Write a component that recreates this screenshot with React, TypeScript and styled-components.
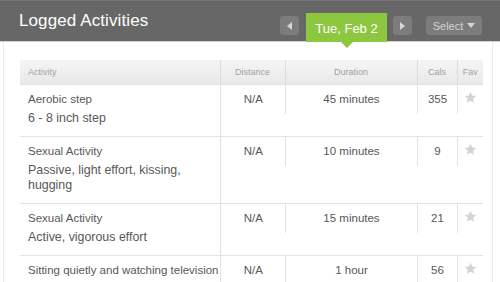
import styled, { createGlobalStyle } from 'styled-components'

type Activity = {
  name: string
  detail?: string
  distance: string
  duration: string
  cals: number
}

const activities: Activity[] = [
  { name: 'Aerobic step', detail: '6 - 8 inch step', distance: 'N/A', duration: '45 minutes', cals: 355 },
  {
    name: 'Sexual Activity',
    detail: 'Passive, light effort, kissing, hugging',
    distance: 'N/A',
    duration: '10 minutes',
    cals: 9,
  },
  { name: 'Sexual Activity', detail: 'Active, vigorous effort', distance: 'N/A', duration: '15 minutes', cals: 21 },
  { name: 'Sitting quietly and watching television', distance: 'N/A', duration: '1 hour', cals: 56 },
]

function StarIcon() {
  return (
    <svg width="13" height="13" viewBox="0 0 24 24">
      <polygon
        points="12,1.5 15.1,8.3 22.5,9.1 17,14.1 18.5,21.5 12,17.8 5.5,21.5 7,14.1 1.5,9.1 8.9,8.3"
        fill="#d4d4d4"
      />
    </svg>
  )
}

function App() {
  return (
    <>
      <GlobalStyle />
      <Header>
        <Title>Logged Activities</Title>
        <Controls>
          <ArrowButton type="button" aria-label="Previous day">
            <svg width="5" height="8" viewBox="0 0 5 8">
              <polygon points="5,0 5,8 0,4" fill="#d6d6d6" />
            </svg>
          </ArrowButton>
          <DateTab>Tue, Feb 2</DateTab>
          <ArrowButton type="button" aria-label="Next day">
            <svg width="5" height="8" viewBox="0 0 5 8">
              <polygon points="0,0 0,8 5,4" fill="#d6d6d6" />
            </svg>
          </ArrowButton>
          <SelectButton type="button">
            Select
            <svg width="8" height="5" viewBox="0 0 8 5">
              <polygon points="0,0 8,0 4,5" fill="#d6d6d6" />
            </svg>
          </SelectButton>
        </Controls>
      </Header>

      <Panel>
        <Table>
          <colgroup>
            <col style={{ width: 200 }} />
            <col style={{ width: 65 }} />
            <col style={{ width: 132 }} />
            <col style={{ width: 40 }} />
            <col style={{ width: 26 }} />
          </colgroup>
          <thead>
            <tr>
              <HeadCell $align="left">Activity</HeadCell>
              <HeadCell>Distance</HeadCell>
              <HeadCell>Duration</HeadCell>
              <HeadCell>Cals</HeadCell>
              <HeadCell>Fav</HeadCell>
            </tr>
          </thead>
          <tbody>
            {activities.map((activity, index) => (
              <Row key={index}>
                <NameCell>
                  <Name>{activity.name}</Name>
                  {activity.detail && <Detail>{activity.detail}</Detail>}
                </NameCell>
                <ValueCell>
                  <Value>{activity.distance}</Value>
                </ValueCell>
                <ValueCell>
                  <Value $divided>{activity.duration}</Value>
                </ValueCell>
                <ValueCell>
                  <Value $divided>{activity.cals}</Value>
                </ValueCell>
                <ValueCell>
                  <Value $divided>
                    <StarIcon />
                  </Value>
                </ValueCell>
              </Row>
            ))}
          </tbody>
        </Table>
      </Panel>
    </>
  )
}

const GlobalStyle = createGlobalStyle`
  body {
    margin: 0;
    background: #fff;
    font-family: "Liberation Sans", Arial, sans-serif;
  }
`

const Header = styled.header`
  height: 42px;
  box-sizing: border-box;
  background: #676767;
  border-top: 1px solid #747474;
  border-bottom: 1px solid #cfcfcf;
  display: flex;
  align-items: center;
  padding: 0 18px 0 19px;
`

const Title = styled.h1`
  margin: 0 0 1px;
  font-size: 17px;
  font-weight: normal;
  color: #fff;
  letter-spacing: 0.1px;
`

const Controls = styled.div`
  margin-left: auto;
  align-self: stretch;
  display: flex;
  align-items: center;
`

const ArrowButton = styled.button`
  width: 19px;
  height: 19px;
  margin-top: 9px;
  border: 0;
  border-radius: 3px;
  background: #7c7c7c;
  display: grid;
  place-items: center;
  padding: 0;
  cursor: pointer;
`

const DateTab = styled.div`
  position: relative;
  align-self: flex-end;
  margin: 0 6px -1px 7px;
  width: 81px;
  height: 29px;
  background: #8dc63f;
  color: #fff;
  font-size: 13px;
  display: flex;
  align-items: center;
  justify-content: center;
  padding-top: 1px;
  box-sizing: border-box;

  &::after {
    content: '';
    position: absolute;
    left: 35px;
    bottom: -6px;
    border-left: 6px solid transparent;
    border-right: 6px solid transparent;
    border-top: 6px solid #8dc63f;
  }
`

const SelectButton = styled.button`
  margin: 9px 0 0 14px;
  width: 56px;
  height: 19px;
  border: 0;
  border-radius: 3px;
  background: #7c7c7c;
  color: #d4d4d4;
  font-family: inherit;
  font-size: 11px;
  display: flex;
  align-items: center;
  justify-content: center;
  gap: 4px;
  padding: 0;
  cursor: pointer;
`

const Panel = styled.main`
  margin: 0 7px 0 3px;
  padding: 18px 9px 0 16px;
  border-left: 1px solid #ececec;
  border-right: 1px solid #ececec;
`

const Table = styled.table`
  width: 463px;
  table-layout: fixed;
  border-collapse: collapse;
`

const HeadCell = styled.th<{ $align?: 'left' | 'center' }>`
  height: 24px;
  padding: 0 0 0 ${(p) => (p.$align === 'left' ? '8px' : '0')};
  background: linear-gradient(180deg, #f5f5f5 0%, #e9e9e9 100%);
  border-left: 1px solid #dcdcdc;
  border-bottom: 1px solid #e2e2e2;
  font-size: 9px;
  font-weight: normal;
  color: #a2a2a2;
  text-align: ${(p) => p.$align ?? 'center'};

  &:first-child {
    border-left: 0;
  }
`

const Row = styled.tr`
  border-bottom: 1px solid #e2e2e2;
`

const NameCell = styled.td`
  padding: 6px 8px 10px;
  border-right: 1px solid #e2e2e2;
  vertical-align: top;
  color: #585858;
`

const Name = styled.div`
  font-size: 11.5px;
  line-height: 16px;
  white-space: nowrap;
`

const Detail = styled.div`
  margin-top: 4px;
  font-size: 12.4px;
  line-height: 15px;
`

const ValueCell = styled.td`
  padding: 0;
  vertical-align: top;
`

const Value = styled.div<{ $divided?: boolean }>`
  height: 29px;
  padding-top: 6px;
  box-sizing: border-box;
  border-left: 1px solid ${(p) => (p.$divided ? '#e2e2e2' : 'transparent')};
  font-size: 11.5px;
  line-height: 16px;
  color: #585858;
  text-align: center;

  svg {
    display: inline-block;
    vertical-align: -1px;
  }
`

export default App
